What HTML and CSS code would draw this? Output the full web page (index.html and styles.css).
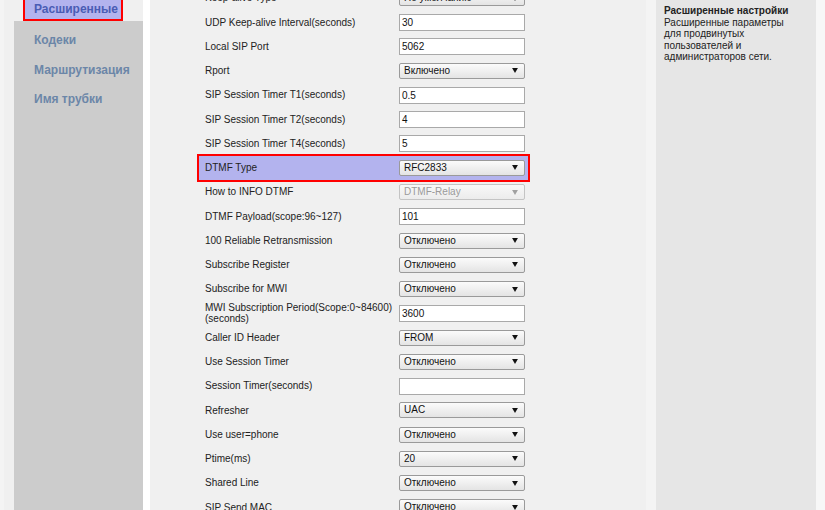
FILE: index.html
```html
<!DOCTYPE html>
<html lang="ru">
<head>
<meta charset="utf-8">
<title>Расширенные</title>
<link rel="stylesheet" href="styles.css">
</head>
<body>
<div class="page">
  <div class="edge"></div>
  <aside class="nav">
    <div class="nav-active">Расширенные</div>
    <ul class="nav-list">
      <li>Кодеки</li>
      <li>Маршрутизация</li>
      <li>Имя трубки</li>
    </ul>
  </aside>
  <div class="divider"></div>
  <main class="content">
    <div class="rows">
      <div class="row"><span class="label">Keep-alive Type</span><div class="select">По умолчанию<svg class="arrow" viewBox="0 0 7 6"><path d="M0 0H7L3.5 6Z"/></svg></div></div>
      <div class="row"><span class="label">UDP Keep-alive Interval(seconds)</span><div class="input">30</div></div>
      <div class="row"><span class="label">Local SIP Port</span><div class="input">5062</div></div>
      <div class="row"><span class="label">Rport</span><div class="select">Включено<svg class="arrow" viewBox="0 0 7 6"><path d="M0 0H7L3.5 6Z"/></svg></div></div>
      <div class="row"><span class="label">SIP Session Timer T1(seconds)</span><div class="input">0.5</div></div>
      <div class="row"><span class="label">SIP Session Timer T2(seconds)</span><div class="input">4</div></div>
      <div class="row"><span class="label">SIP Session Timer T4(seconds)</span><div class="input">5</div></div>
      <div class="row row-hl"><span class="label">DTMF Type</span><div class="select">RFC2833<svg class="arrow" viewBox="0 0 7 6"><path d="M0 0H7L3.5 6Z"/></svg></div></div>
      <div class="row"><span class="label">How to INFO DTMF</span><div class="select disabled">DTMF-Relay<svg class="arrow" viewBox="0 0 7 6"><path d="M0 0H7L3.5 6Z"/></svg></div></div>
      <div class="row"><span class="label">DTMF Payload(scope:96~127)</span><div class="input">101</div></div>
      <div class="row"><span class="label">100 Reliable Retransmission</span><div class="select">Отключено<svg class="arrow" viewBox="0 0 7 6"><path d="M0 0H7L3.5 6Z"/></svg></div></div>
      <div class="row"><span class="label">Subscribe Register</span><div class="select">Отключено<svg class="arrow" viewBox="0 0 7 6"><path d="M0 0H7L3.5 6Z"/></svg></div></div>
      <div class="row"><span class="label">Subscribe for MWI</span><div class="select">Отключено<svg class="arrow" viewBox="0 0 7 6"><path d="M0 0H7L3.5 6Z"/></svg></div></div>
      <div class="row"><span class="label">MWI Subscription Period(Scope:0~84600) (seconds)</span><div class="input">3600</div></div>
      <div class="row"><span class="label">Caller ID Header</span><div class="select">FROM<svg class="arrow" viewBox="0 0 7 6"><path d="M0 0H7L3.5 6Z"/></svg></div></div>
      <div class="row"><span class="label">Use Session Timer</span><div class="select">Отключено<svg class="arrow" viewBox="0 0 7 6"><path d="M0 0H7L3.5 6Z"/></svg></div></div>
      <div class="row"><span class="label">Session Timer(seconds)</span><div class="input"></div></div>
      <div class="row"><span class="label">Refresher</span><div class="select">UAC<svg class="arrow" viewBox="0 0 7 6"><path d="M0 0H7L3.5 6Z"/></svg></div></div>
      <div class="row"><span class="label">Use user=phone</span><div class="select">Отключено<svg class="arrow" viewBox="0 0 7 6"><path d="M0 0H7L3.5 6Z"/></svg></div></div>
      <div class="row"><span class="label">Ptime(ms)</span><div class="select">20<svg class="arrow" viewBox="0 0 7 6"><path d="M0 0H7L3.5 6Z"/></svg></div></div>
      <div class="row"><span class="label">Shared Line</span><div class="select">Отключено<svg class="arrow" viewBox="0 0 7 6"><path d="M0 0H7L3.5 6Z"/></svg></div></div>
      <div class="row"><span class="label">SIP Send MAC</span><div class="select">Отключено<svg class="arrow" viewBox="0 0 7 6"><path d="M0 0H7L3.5 6Z"/></svg></div></div>
    </div>
  </main>
  <div class="gutter"></div>
  <aside class="help">
    <div class="help-title">Расширенные настройки</div>
    <div class="help-text">Расширенные параметры для продвинутых пользователей и администраторов сети.</div>
  </aside>
</div>
</body>
</html>
```
FILE: styles.css
```css
html, body {
  margin: 0;
  padding: 0;
  height: 100%;
  overflow: hidden;
}
body {
  background: #f7f7f7;
  font-family: "Liberation Sans", Arial, sans-serif;
  color: #222;
}
.page {
  display: flex;
  height: 510px;
}
.edge {
  width: 14px;
  flex: none;
  background: #f0f0f0;
  border-left: 4px solid #f4f4f4;
  box-sizing: border-box;
}
.nav {
  width: 129px;
  flex: none;
  display: flex;
  flex-direction: column;
  background: #f0f0f0;
}
.nav-active {
  margin: -10px 0 0 9px;
  width: 100px;
  height: 31px;
  box-sizing: border-box;
  border: 2px solid #f00;
  background: #b3b3ee;
  color: #4a5cb4;
  font-weight: bold;
  font-size: 12px;
  padding: 10px 0 0 9px;
}
.nav-list {
  flex: 1;
  margin: 0;
  padding: 12px 0 0 20px;
  list-style: none;
  background: #cccccc;
}
.nav-list li {
  color: #6b86a8;
  font-weight: bold;
  font-size: 12px;
  height: 29.5px;
  line-height: 14px;
}
.divider {
  width: 7px;
  flex: none;
  background: #ffffff;
}
.content {
  width: 496px;
  flex: none;
  background: #f0f0f0;
}
.rows {
  margin-top: -14px;
  padding-left: 49px;
}
.row {
  display: flex;
  align-items: center;
  width: 329px;
  height: 24.25px;
  box-sizing: border-box;
  padding-left: 6px;
  font-size: 10px;
}
.row-hl {
  background: #b3b3ee;
  outline: 2px solid #f00;
  position: relative;
}
.label {
  width: 194px;
  flex: none;
  line-height: 11.5px;
}
.input {
  width: 126px;
  height: 17px;
  box-sizing: border-box;
  border: 1px solid #a9a9a9;
  background: #fff;
  padding: 0 2px;
  line-height: 15px;
  font-size: 10px;
  color: #111;
}
.select {
  width: 126px;
  height: 16px;
  box-sizing: border-box;
  border: 1px solid #9a9a9a;
  border-radius: 2px;
  background: linear-gradient(#fbfbfb, #e4e4e4);
  padding: 0 0 0 4px;
  line-height: 14px;
  font-size: 10px;
  color: #111;
  display: flex;
  align-items: center;
  justify-content: space-between;
}
.select .arrow {
  width: 6px;
  height: 5px;
  margin-right: 6px;
  fill: #111;
}
.select.disabled {
  color: #9a9a9a;
  border-color: #c4c4c4;
  background: linear-gradient(#f8f8f8, #ececec);
}
.select.disabled .arrow {
  fill: #a0a0a0;
}
.gutter {
  width: 10px;
  flex: none;
  background: #f4f4f4;
}
.help {
  width: 160px;
  flex: none;
  background: #e6e6e6;
  padding: 5px 8px 0 8px;
  box-sizing: border-box;
  font-size: 10px;
  line-height: 11.5px;
  color: #222;
}
.help-title {
  font-weight: bold;
}
.help-text {
  width: 130px;
}
```
